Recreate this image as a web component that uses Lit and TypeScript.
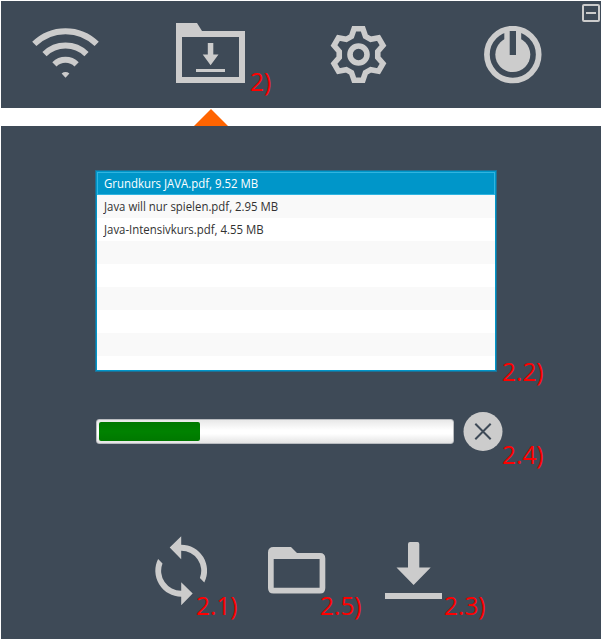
import { LitElement, html, svg, css } from "lit";
import { customElement, property, state } from "lit/decorators.js";

const gearPoints = (cx: number, cy: number): string => {
  const tooth = [[-7, -18.2], [-4.4, -25.7], [4.4, -25.7], [7, -18.2]];
  const points: string[] = [];
  for (let i = 0; i < 6; i++) {
    const a = (i * Math.PI) / 3;
    for (const [x, y] of tooth) {
      const px = cx + x * Math.cos(a) - y * Math.sin(a);
      const py = cy + x * Math.sin(a) + y * Math.cos(a);
      points.push(`${px.toFixed(2)},${py.toFixed(2)}`);
    }
  }
  return points.join(" ");
};

const icons: Record<string, { w: number; h: number; body: unknown }> = {
  wifi: {
    w: 68, h: 52,
    body: svg`<g fill="none" stroke="#ccc" stroke-width="6">
      <path d="M3.3 15.9A44.5 44.5 0 0 1 65.7 15.9"/>
      <path d="M13.5 26.2A30 30 0 0 1 55.5 26.2"/>
      <path d="M23.4 36.4A15.8 15.8 0 0 1 45.6 36.4"/></g>
      <path d="M30.6 45.4Q34.5 42.8 38.4 45.4L34.5 49.8Z"/>`,
  },
  inbox: {
    w: 69, h: 60,
    body: svg`<path fill-rule="evenodd" d="M0 0H21L26 8H69V60H0ZM6 14V54H63V14Z"/>
      <path d="M31.8 20H37.3V31.5H42.5L34.6 42.3L26.7 31.5H31.8ZM20 46H49V49H20Z"/>`,
  },
  gear: {
    w: 58, h: 58,
    body: svg`<g fill="none" stroke="#ccc" stroke-width="5.6">
      <polygon points=${gearPoints(28.5, 28.5)}/>
      <circle cx="28.5" cy="28.5" r="8.5"/></g>`,
  },
  power: {
    w: 58, h: 58,
    body: svg`<circle cx="28.8" cy="28.6" r="25.9" fill="none" stroke="#ccc" stroke-width="5.7"/>
      <circle cx="28.8" cy="28.6" r="17.5"/><path d="M20.3 5H37.2V20H20.3Z"/>
      <path fill="#3e4a57" d="M25.7 5H32V29H25.7Z"/>`,
  },
  minimize: {
    w: 18, h: 18,
    body: svg`<rect x="1" y="1" width="16" height="16" rx="1" fill="none" stroke="#ccc" stroke-width="2"/>
      <path d="M4 8H14V10H4Z"/>`,
  },
  cancel: {
    w: 40, h: 40,
    body: svg`<circle cx="20" cy="19.5" r="19.5"/>
      <path d="M12.3 11.8L27.7 27.2M27.7 11.8L12.3 27.2" stroke="#3e4a57" stroke-width="2"/>`,
  },
  refresh: {
    w: 52, h: 70,
    body: svg`<path d="M14.7 11.6L26.2 .3V8.7A26 26 0 0 1 49.3 46.4L44.9 42A20 20 0 0 0 26.2 14.8V23.2Z"/>
      <path d="M37.7 57.6L26.2 69.3V60.7A26 26 0 0 1 3.1 23L7.5 27.4A20 20 0 0 0 26.2 54.7V46.2Z"/>`,
  },
  folder: {
    w: 58, h: 47,
    body: svg`<path fill-rule="evenodd" d="M5 0H23L29 6H52Q57.3 6 57.3 11.5V41Q57.3 46.5 52 46.5H5.5Q0 46.5 0 41V5.5Q0 0 5.5 0ZM5.7 12V40.7H51.6V12Z"/>`,
  },
  download: {
    w: 57, h: 57,
    body: svg`<path d="M25 0H32.5Q34.3 0 34.3 2V25.5H45.7L28.6 43L11.5 25.5H23V2Q23 0 25 0ZM0 51H57V57H0Z"/>`,
  },
};

@customElement("ui-icon")
class UiIcon extends LitElement {
  @property() name = "";
  static styles = css`
    :host { display: block; }
    svg { display: block; fill: #ccc; }
  `;
  render() {
    const { w, h, body } = icons[this.name];
    return html`<svg width=${w} height=${h} viewBox="0 0 ${w} ${h}">${body}</svg>`;
  }
}

@customElement("app-root")
class AppRoot extends LitElement {
  @state() files = [
    { name: "Grundkurs JAVA.pdf", size: "9.52 MB" },
    { name: "Java will nur spielen.pdf", size: "2.95 MB" },
    { name: "Java-Intensivkurs.pdf", size: "4.55 MB" },
  ];
  @state() selected = 0;
  @state() progress = 28.7;

  static styles = css`
    :host {
      display: block; box-sizing: border-box; width: 602px; height: 639px; padding: 1px 1px 0;
      background: #fff; overflow: hidden; font-family: "Open Sans", "Noto Sans", sans-serif;
    }
    .toolbar {
      position: relative; display: flex; align-items: flex-start; height: 107px;
      box-sizing: border-box; padding: 22px 0 0 30px; background: #3e4a57;
    }
    .wifi { margin: 5px 0 0; }
    .inbox { margin-left: 77px; }
    .gear { margin: 3px 0 0 85px; }
    .power { margin: 3px 0 0 96px; }
    .minimize { position: absolute; right: 1px; top: 3px; }
    .spot { position: relative; }
    .note {
      position: absolute; color: #f00; font-size: 26px; line-height: 30px;
      white-space: pre; transform-origin: 0 0; transform: scaleX(.94);
    }
    .pointer { display: flex; height: 18px; padding-left: 193px; align-items: flex-end; }
    .pointer svg { display: block; }
    .panel {
      height: 513px; box-sizing: border-box; padding: 45px 0 0 95px; background: #3e4a57;
    }
    .list {
      box-sizing: border-box; width: 400px; height: 200px; border: 1px solid #0096c9;
      box-shadow: 0 0 0 1px #1f7094; background: #fff; overflow: hidden;
    }
    .list-spot { width: 400px; }
    .row {
      height: 23px; box-sizing: border-box; padding-left: 7px; font-size: 12px; line-height: 23px;
      color: #323232; white-space: pre;
    }
    .row span { display: inline-block; transform-origin: 0 50%; transform: scaleX(.95); }
    .row:nth-child(even) { background: #f9f9f9; }
    .row.active { background: #0096c9; color: #fff; box-shadow: inset 0 0 0 1px #30b4e0; }
    .transfer { display: flex; align-items: center; gap: 9px; margin-top: 41px; height: 40px; }
    .track {
      box-sizing: border-box; width: 358px; height: 25px; margin-bottom: 2px; padding: 2px;
      border: 1px solid #b9bcc0; border-radius: 3px;
      background: linear-gradient(#e8e8e8, #fff 45%, #fff 60%, #e4e4e4);
    }
    .bar { height: 19px; border-radius: 2px; background: linear-gradient(#007800, #008200 50%, #007800); }
    .actions { display: flex; align-items: flex-start; margin: 84px 0 0 59px; }
    .folder { margin: 11px 0 0 61px; }
    .download { margin: 6px 0 0 59px; }
    .n-inbox { left: 74px; top: 43px; }
    .n-list { left: 406px; top: 185px; }
    .n-cancel { left: 39px; top: 27px; }
    .n-refresh { left: 41px; top: 54px; }
    .n-folder { left: 52px; top: 43px; }
    .n-download { left: 59px; top: 48px; }
  `;

  render() {
    const rows = Array.from({ length: 9 }, (_, i) => this.files[i]);
    return html`
      <header class="toolbar">
        <ui-icon class="wifi" name="wifi"></ui-icon>
        <div class="spot inbox"><ui-icon name="inbox"></ui-icon><span class="note n-inbox">2)</span></div>
        <ui-icon class="gear" name="gear"></ui-icon>
        <ui-icon class="power" name="power"></ui-icon>
        <ui-icon class="minimize" name="minimize"></ui-icon>
      </header>
      <div class="pointer"><svg width="34" height="17" viewBox="0 0 34 17"><path d="M17 0L34 17H0Z" fill="#ff6400"/></svg></div>
      <main class="panel">
        <div class="spot list-spot">
          <div class="list">
            ${rows.map((f, i) => html`<div class="row ${i === this.selected ? "active" : ""}" @click=${() => f && (this.selected = i)}>${f ? html`<span>${f.name}, ${f.size}</span>` : ""}</div>`)}
          </div>
          <span class="note n-list">2.2)</span>
        </div>
        <div class="transfer">
          <div class="track"><div class="bar" style="width:${this.progress}%"></div></div>
          <div class="spot"><ui-icon name="cancel"></ui-icon><span class="note n-cancel">2.4)</span></div>
        </div>
        <div class="actions">
          <div class="spot"><ui-icon name="refresh"></ui-icon><span class="note n-refresh">2.1)</span></div>
          <div class="spot folder"><ui-icon name="folder"></ui-icon><span class="note n-folder">2.5)</span></div>
          <div class="spot download"><ui-icon name="download"></ui-icon><span class="note n-download">2.3)</span></div>
        </div>
      </main>
    `;
  }
}
